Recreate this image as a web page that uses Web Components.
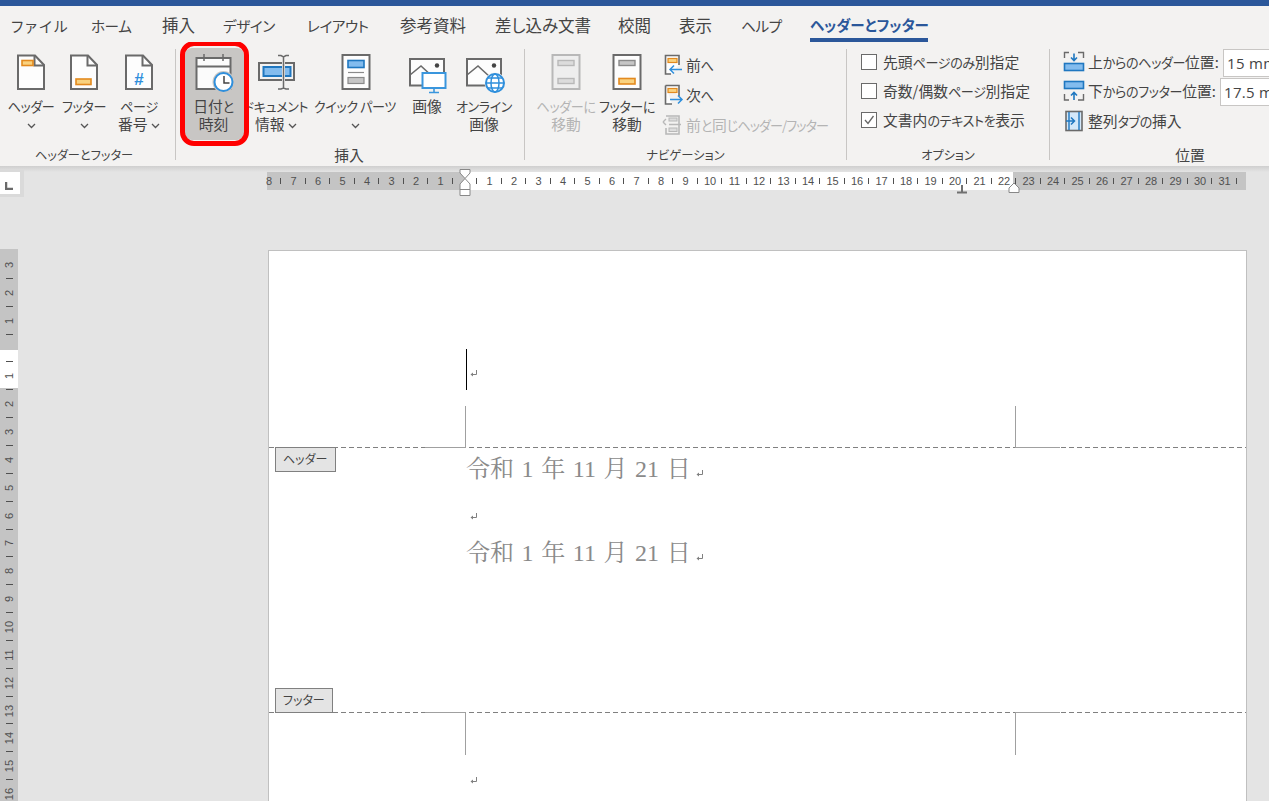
<!DOCTYPE html>
<html lang="ja"><head><meta charset="utf-8"><title>Word</title>
<style>
html,body{margin:0;padding:0;height:100%;overflow:hidden;background:#e4e4e4}
body{font-family:"Noto Sans CJK JP","Liberation Sans",sans-serif;color:#444}
</style></head><body>
<word-app>
  <rb-tabs>
    <rb-tab style="width:80px"><k-a style="letter-spacing:2px">ファイル</k-a></rb-tab><rb-tab style="width:71px"><k-a>ホーム</k-a></rb-tab><rb-tab style="width:61px">挿入</rb-tab><rb-tab style="width:84px"><k-a>デザイン</k-a></rb-tab><rb-tab style="width:93px"><k-a>レイアウト</k-a></rb-tab><rb-tab style="width:95px">参考資料</rb-tab><rb-tab style="width:123px">差し込み文書</rb-tab><rb-tab style="width:61px">校閲</rb-tab><rb-tab style="width:62px">表示</rb-tab><rb-tab style="width:69px"><k-a>ヘルプ</k-a></rb-tab><rb-tab active>ヘッダーとフッター</rb-tab>
  </rb-tabs>
  <rb-ribbon>
    <rb-group label="ヘッダーとフッター" style="width:175px;--pad:2px;--lf:12.200px;--lr:7px">
      <rb-big icon="header" style="width:58px"><k-a>ヘッダー</k-a><br><rb-chev></rb-chev></rb-big>
      <rb-big icon="footer" style="width:48px"><k-a>フッター</k-a><br><rb-chev></rb-chev></rb-big>
      <rb-big icon="pageno" style="width:62px"><k-a>ページ</k-a><br>番号 <rb-chev></rb-chev></rb-big>
    </rb-group><rb-sep></rb-sep>
    <rb-group label="挿入" style="width:348px;--pad:9px;--lr:2px">
      <rb-big icon="calendar" mark style="width:59px">日付<k-a>と</k-a><br>時刻</rb-big>
      <rb-big icon="docinfo" style="width:64px"><k-a>ドキュメント</k-a><br>情報 <rb-chev></rb-chev></rb-big>
      <rb-big icon="quick" style="width:84px;margin-left:5px"><k-a>クイック パーツ</k-a><br><rb-chev></rb-chev></rb-big>
      <rb-big icon="image" style="width:54px;margin-left:3px">画像</rb-big>
      <rb-big icon="online" style="width:60px"><k-a>オンライン</k-a><br>画像</rb-big>
    </rb-group><rb-sep></rb-sep>
    <rb-group label="ナビゲーション" style="width:321px;--pad:11px;--lf:12.300px">
      <rb-big icon="gohead" disabled style="width:60px"><k-a>ヘッダーに</k-a><br>移動</rb-big>
      <rb-big icon="gofoot" style="width:60px;margin-left:1px"><k-a>フッターに</k-a><br>移動</rb-big>
      <rb-col style="margin-left:5px;--rh:30px;margin-top:2px;--gap:2px">
        <rb-small icon="prev">前<k-a>へ</k-a></rb-small>
        <rb-small icon="next">次<k-a>へ</k-a></rb-small>
        <rb-small icon="same" disabled>前<k-a>と</k-a>同<k-a style="letter-spacing:-.07em">じヘッダー/フッター</k-a></rb-small>
      </rb-col>
    </rb-group><rb-sep></rb-sep>
    <rb-group label="オプション" style="width:202px;--pad:14px;--lf:12.200px">
      <rb-col style="--rh:29px;margin-top:-1px">
        <rb-check>先頭<k-a>ページのみ</k-a>別指定</rb-check>
        <rb-check>奇数/偶数<k-a>ページ</k-a>別指定</rb-check>
        <rb-check checked>文書内<k-a>のテキストを</k-a>表示</rb-check>
      </rb-col>
    </rb-group><rb-sep></rb-sep>
    <rb-group label="位置" style="width:280px;--pad:13px">
      <rb-col style="--rh:29px">
        <rb-small icon="postop"><rb-field value="15 mm" w="135">上<k-a>からのヘッダー</k-a>位置:</rb-field></rb-small>
        <rb-small icon="posbot"><rb-field value="17.5 mm" w="132">下<k-a>からのフッター</k-a>位置:</rb-field></rb-small>
        <rb-small icon="align" style="margin-top:1px">整列<k-a>タブの</k-a>挿入</rb-small>
      </rb-col>
    </rb-group>
  </rb-ribbon>
  <ruler-row></ruler-row>
  <work-area>
    <ruler-v></ruler-v>
    <doc-page>
      <doc-line caret style="margin-top:98px;height:41px;--mt:12px"></doc-line>
      <doc-zone style="height:57px"></doc-zone>
      <doc-rule></doc-rule>
      <doc-line style="height:42px">令和 1 年 11 月 21 日</doc-line>
      <doc-line style="height:42px;--mt:11px"></doc-line>
      <doc-line style="height:42px">令和 1 年 11 月 21 日</doc-line>
      <doc-zone style="height:138px"></doc-zone>
      <doc-rule></doc-rule>
      <doc-zone style="height:61px"></doc-zone>
      <doc-line style="height:20px"></doc-line>
      <doc-tag style="top:196px;left:6px;width:61px">ヘッダー</doc-tag>
      <doc-tag style="top:437px;left:6px;width:58px">フッター</doc-tag>
      <crop-mark style="left:156px;top:155px;border-width:0 1px 1px 0;width:40px;height:41px"></crop-mark>
      <crop-mark style="left:746px;top:155px;border-width:0 0 1px 1px;width:44px;height:41px"></crop-mark>
      <crop-mark style="left:156px;top:461px;border-width:1px 1px 0 0;width:40px;height:42px"></crop-mark>
      <crop-mark style="left:746px;top:461px;border-width:1px 0 0 1px;width:44px;height:42px"></crop-mark>
    </doc-page>
  </work-area>
</word-app>
<script>
const FONT='"Noto Sans CJK JP","Liberation Sans",sans-serif';
const G='#6a6a6a',B='#2f8fdc',BF='#83bcee',BS='#1f77c0',OF='#f9d27f',OS='#e38a1f',GF='#c6c6c6',GS='#8a8a8a',D='#b8b8b8';
const page=()=>`<path d="M9 5.5H26L35 15V39H9Z" fill="#fdfdfd" stroke="${G}" stroke-width="2"/><path d="M25.5 5V15.5H35.5" fill="none" stroke="${G}" stroke-width="2"/>`;
const frame=`<rect x="8.5" y="5" width="27" height="34" fill="#fdfdfd" stroke="${G}" stroke-width="2"/>`;
const ICONS={
header:page()+`<rect x="13" y="10.500" width="11" height="5" fill="${OF}" stroke="${OS}" stroke-width="1.600"/>`,
footer:page()+`<rect x="14" y="29" width="15" height="5.500" fill="${OF}" stroke="${OS}" stroke-width="1.600"/>`,
pageno:page()+`<text x="22" y="35" text-anchor="middle" font-family="Liberation Sans" font-weight="700" font-size="17" fill="${B}">#</text>`,
calendar:`<g transform="translate(-4.500,0)"><rect x="8" y="8" width="34" height="31" fill="#fbfbfb" stroke="${G}" stroke-width="2"/><path d="M8 16.500H42" stroke="${G}" stroke-width="2"/><path d="M15.500 4V11M34.500 4V11" stroke="${G}" stroke-width="1.500"/><circle cx="35" cy="32" r="11" fill="#c8c6c4"/><circle cx="35" cy="32" r="9" fill="#fff" stroke="${B}" stroke-width="2"/><path d="M35.500 26V33H41" fill="none" stroke="#444" stroke-width="1.500"/></g>`,
docinfo:`<rect x="5" y="13" width="35" height="17" fill="#f3f2f1" stroke="${G}" stroke-width="2"/><rect x="9.500" y="17" width="27" height="9" fill="${BF}" stroke="${BS}" stroke-width="2"/><rect x="28" y="5" width="3" height="34" fill="#f3f2f1"/><path d="M29.500 7V38M24 5.500H27L29.500 7L32 5.500H35M24 39H27L29.500 38L32 39H35" fill="none" stroke="${G}" stroke-width="1.500"/>`,
quick:`<g transform="translate(1,0)"><rect x="8.500" y="5" width="27" height="34" fill="#fdfdfd" stroke="${G}" stroke-width="2"/><rect x="14" y="10.500" width="16" height="7" fill="${BF}" stroke="${BS}" stroke-width="1.600"/><path d="M14 22.500H30" stroke="${GS}" stroke-width="1.200"/><rect x="14" y="27.500" width="16" height="6" fill="${GF}" stroke="${GS}" stroke-width="1.200"/></g>`,
image:`<g transform="translate(2,0)"><rect x="3" y="9" width="34" height="26.500" fill="#fdfdfd" stroke="${G}" stroke-width="2"/><path d="M3 25L14 16L26 27" fill="none" stroke="${G}" stroke-width="1.600"/><circle cx="30" cy="15.500" r="2.200" fill="#444"/><rect x="15.500" y="23" width="23" height="15" fill="#fff" stroke="#3a96dd" stroke-width="2"/><path d="M27 38V42M22 42.500H32" stroke="#3a96dd" stroke-width="1.600"/></g>`,
online:`<rect x="5" y="9" width="34" height="26.500" fill="#fdfdfd" stroke="${G}" stroke-width="2"/><path d="M5 25L16 16L28 27" fill="none" stroke="${G}" stroke-width="1.600"/><circle cx="32" cy="15.500" r="2.200" fill="#444"/><circle cx="33" cy="33" r="10.500" fill="#f3f2f1"/><circle cx="33" cy="33" r="9" fill="#fff" stroke="${B}" stroke-width="2"/><ellipse cx="33" cy="33" rx="4" ry="9" fill="none" stroke="${B}" stroke-width="1.500"/><path d="M24 33H42M25.500 28H40.500M25.500 38H40.500" stroke="${B}" stroke-width="1.500"/>`,
gohead:`<rect x="8.500" y="5" width="27" height="34" fill="#eeeeee" stroke="${D}" stroke-width="2"/><rect x="14" y="10.500" width="16" height="5" fill="#dcdcdc" stroke="${D}" stroke-width="1.400"/><rect x="14" y="28.500" width="16" height="5" fill="#dcdcdc" stroke="${D}" stroke-width="1.400"/>`,
gofoot:frame+`<rect x="14" y="10.500" width="16" height="5" fill="${GF}" stroke="${GS}" stroke-width="1.400"/><rect x="14" y="28.500" width="16" height="5.500" fill="${OF}" stroke="${OS}" stroke-width="1.600"/>`,
prev:`<path d="M9 20H3.500V1.500H17V11" fill="#fdfdfd" stroke="${G}" stroke-width="1.600"/><rect x="6" y="4.500" width="9" height="4" fill="${OF}" stroke="${OS}" stroke-width="1.200"/><path d="M20 15.500H8M12 11.500L8 15.500L12 19.500" fill="none" stroke="${B}" stroke-width="1.500"/>`,
next:`<path d="M3.500 1.500H17V12M10 20H3.500V1.500" fill="#fdfdfd" stroke="${G}" stroke-width="1.600"/><rect x="6" y="4.500" width="9" height="4" fill="${OF}" stroke="${OS}" stroke-width="1.200"/><path d="M8 15.500H20M16 11.500L20 15.500L16 19.500" fill="none" stroke="${B}" stroke-width="1.500"/>`,
same:`<path d="M4 2H17V20H4V14" fill="none" stroke="${D}" stroke-width="1.600"/><path d="M7 10.500H19M1 8L4 5M1 8L4 11" fill="none" stroke="${D}" stroke-width="1.400"/><rect x="7" y="4" width="8" height="3" fill="#ddd" stroke="${D}"/><rect x="7" y="14" width="8" height="3.500" fill="#ddd" stroke="${D}"/>`,
postop:`<path d="M1.500 7V1.500H6M15 1.500H20.500V7" fill="none" stroke="${G}" stroke-width="1.400"/><path d="M11 2.500V9M8 6.500L11 9.500L14 6.500" fill="none" stroke="${BS}" stroke-width="1.600"/><rect x="1.500" y="12.500" width="19" height="7" fill="${BF}" stroke="${BS}" stroke-width="1.600"/>`,
posbot:`<rect x="1.500" y="1.500" width="19" height="7" fill="${BF}" stroke="${BS}" stroke-width="1.600"/><path d="M11 20V13M8 15.500L11 12.500L14 15.500" fill="none" stroke="${BS}" stroke-width="1.600"/><path d="M1.500 14V20H6M15 20H20.500V14" fill="none" stroke="${G}" stroke-width="1.400"/>`,
align:`<rect x="3" y="1.500" width="16" height="19" fill="#d4e8f9" stroke="${G}" stroke-width="1.600"/><path d="M6 2V20M16 2V20" stroke="${BS}" stroke-width="1.400"/><path d="M3 11H11M8 7.500L11.500 11L8 14.500" fill="none" stroke="${BS}" stroke-width="1.500"/>`
};
const SMALL=new Set(['prev','next','same','postop','posbot','align']);
function iconSvg(n){return SMALL.has(n)?`<svg width="22" height="22" viewBox="0 0 22 22">${ICONS[n]}</svg>`:`<svg width="44" height="44" viewBox="0 0 44 44">${ICONS[n]}</svg>`}
function base(css,html){return class extends HTMLElement{constructor(){super();this.attachShadow({mode:'open'}).innerHTML=`<style>${css}</style>${html}`}}}
const d=(n,c)=>customElements.define(n,c);

d('k-a',base(`:host{display:inline;font-size:.885em;letter-spacing:-.03em}`,`<slot></slot>`));
d('word-app',base(`:host{display:flex;flex-direction:column;width:1269px;height:801px;overflow:hidden;background:#e4e4e4;font-family:${FONT};color:#444;font-feature-settings:"palt";position:relative}
.bar{height:6px;background:#2b579a;flex:none}`,`<div class="bar"></div><slot></slot>`));
d('rb-tabs',base(`:host{display:flex;height:36px;background:#f3f2f1;padding-left:11px;flex:none;box-sizing:border-box}`,`<slot></slot>`));
d('rb-tab',class extends base(`:host{display:block;flex:none;font-size:16.500px;line-height:38px;height:36px;white-space:nowrap;color:#444;box-sizing:border-box}
:host([active]){color:#2b579a;font-weight:700;width:118px;border-bottom:4px solid #2b579a;font-size:14.500px}`,`<slot></slot>`){});
d('rb-ribbon',base(`:host{display:flex;height:124px;background:#f3f2f1;flex:none;overflow:hidden}`,`<slot></slot>`));
d('rb-sep',base(`:host{display:block;flex:none;width:1px;margin:7px 0 6px;background:#c8c6c4}`,``));
d('rb-group',class extends base(`:host{display:flex;flex-direction:column;flex:none;height:124px}
.c{display:flex;flex:1;padding:6px 0 0 var(--pad,0);min-height:0}
.l{height:24px;line-height:26px;text-align:center;font-size:var(--lf,14.800px);padding-right:var(--lr,0);color:#444;white-space:nowrap;flex:none}`,`<div class="c"><slot></slot></div><div class="l"></div>`){
 connectedCallback(){this.shadowRoot.querySelector('.l').textContent=this.getAttribute('label')}});
d('rb-chev',base(`:host{display:inline-block;width:9px;height:6px;vertical-align:1px}svg{display:block}`,`<svg width="9" height="6" viewBox="0 0 9 6"><path d="M1 1L4.500 4.500L8 1" fill="none" stroke="#555" stroke-width="1.300"/></svg>`));
d('rb-big',class extends base(`:host{display:block;flex:none;height:92px;position:relative;text-align:center;box-sizing:border-box;padding-top:2px;font-size:14.800px;line-height:17.500px;color:#444}
:host([disabled]){color:#b4b4b4}
:host([mark]){background:#c8c6c4;border-radius:7px}
:host([mark]) .ring{display:block}
:host([mark]) .t{padding-right:2px}
svg{display:block;margin:0 auto 2.500px}
.t{white-space:nowrap;display:flex;justify-content:center}
.t>span{display:block}
.ring{display:none;position:absolute;left:-5px;right:-5px;top:-7px;bottom:-6px;border:5px solid #f00;border-radius:14px;z-index:3;pointer-events:none;box-sizing:border-box}`,`<div class="i"></div><div class="t"><span><slot></slot></span></div><div class="ring"></div>`){
 connectedCallback(){this.shadowRoot.querySelector('.i').innerHTML=iconSvg(this.getAttribute('icon'))}});
d('rb-col',base(`:host{display:flex;flex-direction:column;flex:none}::slotted(*){height:var(--rh,30px)}`,`<slot></slot>`));
d('rb-small',class extends base(`:host{display:flex;align-items:center;gap:var(--gap,3px);font-size:14.800px;white-space:nowrap;color:#444}
:host([disabled]){color:#b4b4b4}svg{display:block;flex:none}.i{display:block;margin-top:-1px}.t{height:100%;padding-bottom:2px;box-sizing:border-box;display:flex;align-items:center}`,`<span class="i"></span><span class="t"><span><slot></slot></span></span>`){
 connectedCallback(){this.shadowRoot.querySelector('.i').innerHTML=iconSvg(this.getAttribute('icon'))}});
d('rb-check',class extends base(`:host{display:flex;align-items:center;gap:6px;font-size:14.800px;white-space:nowrap;color:#444}
.b{width:14px;height:14px;border:1px solid #6a6a6a;background:#fff;flex:none}svg{display:none}
:host([checked]) svg{display:block}`,`<div class="b"><svg width="14" height="14" viewBox="0 0 14 14"><path d="M3 7L6 10.500L11.500 3" fill="none" stroke="#666" stroke-width="1.300"/></svg></div><span><slot></slot></span>`){});
d('rb-field',class extends base(`:host{display:flex;align-items:center;height:100%;margin-bottom:-2px}
.l{white-space:nowrap;flex:none;padding-bottom:2px}
.v{flex:none;width:70px;height:28px;box-sizing:border-box;background:#fff;border:1px solid #c8c6c4;font:15px/26px "Open Sans","Liberation Sans",sans-serif;letter-spacing:.3px;padding-left:3px;color:#444;white-space:nowrap;overflow:hidden}`,`<div class="l"><slot></slot></div><div class="v"></div>`){
 connectedCallback(){const s=this.shadowRoot;s.querySelector('.v').textContent=this.getAttribute('value');s.querySelector('.l').style.width=this.getAttribute('w')+'px'}});

d('ruler-row',base(`:host{display:flex;height:84px;flex:none;background:linear-gradient(#cfcfcf,#e4e4e4 6px);background-repeat:no-repeat}
.tab{flex:none;width:20px;height:22px;margin-top:4px;background:#fff;border:solid #dadada;border-width:2px 4px 3px 0;position:relative}
.tab svg{display:block;margin:10px 0 0 5px}
.sp{width:243px;flex:none}`,`<div class="tab"><svg width="9" height="8" viewBox="0 0 9 8"><path d="M1 0V7H8" fill="none" stroke="#6a6a6a" stroke-width="2.500"/></svg></div><div class="sp"></div><ruler-h></ruler-h>`));
d('ruler-h',class extends base(`:host{display:block;flex:none;width:979px;height:18px;margin-top:6px;position:relative;background:linear-gradient(90deg,#c4c4c4 198px,#fff 198px,#fff 746px,#c4c4c4 746px)}
.s{display:flex;margin-left:-10.250px;height:18px;overflow:visible;font:11px/18px "Liberation Sans",sans-serif;color:#505050}
.c{flex:none;width:24.500px;text-align:center;background:linear-gradient(#505050,#505050) no-repeat right center/1px 6px}
.m{position:absolute;display:block}`,`<div class="s"></div>
<svg class="m" style="left:192px;top:-3px" width="12" height="28" viewBox="0 0 12 28"><path d="M1 .500H11V4L6 9.500L1 4Z" fill="#fff" stroke="#888"/><path d="M6 9.500L11 15V26.500H1V15Z" fill="#fff" stroke="#888"/><path d="M1 20.500H11" stroke="#888"/></svg>
<svg class="m" style="left:741px;top:10px" width="12" height="12" viewBox="0 0 12 12"><path d="M6 1L11 6V10.500H1V6Z" fill="#fff" stroke="#888"/></svg>
<svg class="m" style="left:689px;top:13px" width="12" height="9" viewBox="0 0 12 9"><path d="M6 0V7M1 7.500H11" stroke="#707070" stroke-width="2"/></svg>`){
 connectedCallback(){const s=this.shadowRoot.querySelector('.s');let h='';for(let i=-8;i<=31;i++)h+=`<div class="c">${i?Math.abs(i):''}</div>`;s.innerHTML=h}});
d('work-area',base(`:host{display:flex;flex:1;min-height:0;align-items:flex-start}`,`<slot></slot>`));
d('ruler-v',class extends base(`:host{display:block;flex:none;width:18px;height:552px;margin-top:-1px;overflow:hidden;background:linear-gradient(#c4c4c4 101px,#fff 101px,#fff 139px,#c4c4c4 139px)}
.s{padding-top:2.100px;font:11px/18px "Liberation Sans",sans-serif;color:#505050}
.c{height:27.850px;display:flex;align-items:center;justify-content:center;background:linear-gradient(#505050,#505050) no-repeat center bottom/7px 1px}
.c span{display:block;transform:rotate(-90deg)}`,`<div class="s"></div>`){
 connectedCallback(){const s=this.shadowRoot.querySelector('.s');let h='';for(let i=-3;i<=17;i++)h+=`<div class="c"><span>${i?Math.abs(i):''}</span></div>`;s.innerHTML=h}});
d('doc-page',base(`:host{display:block;flex:none;position:relative;width:977px;height:560px;margin-left:250px;background:#fff;border:1px solid #c0c0c0;overflow:hidden}`,`<slot></slot>`));
d('doc-zone',base(`:host{display:block}`,``));
d('doc-rule',base(`:host{display:block;height:1px;background:repeating-linear-gradient(90deg,#808080 0 5px,transparent 5px 8px)}`,``));
d('doc-line',class extends base(`:host{display:flex;align-items:flex-end;padding-left:197px;font:24px/42px "Liberation Serif","Noto Serif CJK JP","Noto Sans CJK JP",serif;color:#8a8a8a;white-space:nowrap;word-spacing:1.600px;font-feature-settings:normal;position:relative}
.caret{display:none;width:1px;background:#000;height:41px;position:absolute;left:197px;top:0}
:host([caret]) .caret{display:block}
svg{display:block;flex:none;margin:0 0 12px 4px}
:host(:empty) svg{margin:0 0 var(--mt,9px) 3px}`,`<div class="caret"></div><slot></slot><svg width="9" height="9" viewBox="0 0 9 9"><path d="M7.500 1V5.500H2" fill="none" stroke="#808080"/><path d="M4 3.500L1.500 5.500L4 7.500Z" fill="#808080"/></svg>`){});
d('doc-tag',base(`:host{display:block;position:absolute;height:25px;box-sizing:border-box;background:#e4e4e4;border:1px solid #808080;font-size:12px;line-height:22px;padding-left:7px;color:#444;white-space:nowrap}`,`<slot></slot>`));
d('crop-mark',base(`:host{display:block;position:absolute;border:0 solid #a0a0a0;box-sizing:content-box}`,``));
</script>
</body></html>
